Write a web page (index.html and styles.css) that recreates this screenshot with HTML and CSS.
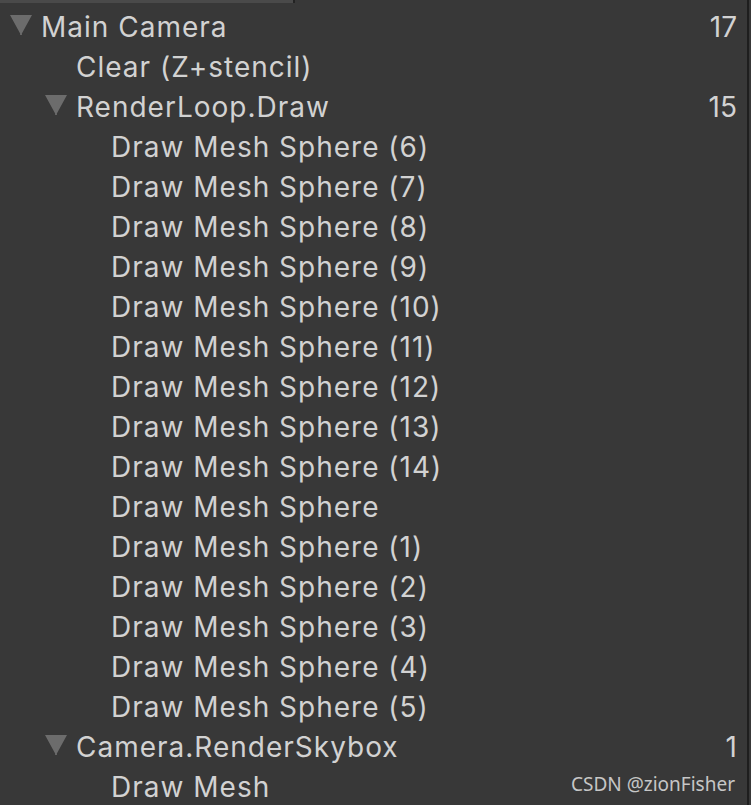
FILE: index.html
```html
<!DOCTYPE html>
<html>
<head>
<meta charset="utf-8">
<link rel="stylesheet" href="styles.css">
</head>
<body>
<div class="panel">
  <div class="topbar"><div class="tab"></div><div class="tabgap"></div></div>
  <div class="tree">
    <div class="row l0"><span class="tri"></span><span class="name">Main Camera</span><span class="count">17</span></div>
    <div class="row l1"><span class="name">Clear (Z+stencil)</span></div>
    <div class="row l1"><span class="tri"></span><span class="name">RenderLoop.Draw</span><span class="count">15</span></div>
    <div class="row l2"><span class="name">Draw Mesh Sphere (6)</span></div>
    <div class="row l2"><span class="name">Draw Mesh Sphere (7)</span></div>
    <div class="row l2"><span class="name">Draw Mesh Sphere (8)</span></div>
    <div class="row l2"><span class="name">Draw Mesh Sphere (9)</span></div>
    <div class="row l2"><span class="name">Draw Mesh Sphere (10)</span></div>
    <div class="row l2"><span class="name">Draw Mesh Sphere (11)</span></div>
    <div class="row l2"><span class="name">Draw Mesh Sphere (12)</span></div>
    <div class="row l2"><span class="name">Draw Mesh Sphere (13)</span></div>
    <div class="row l2"><span class="name">Draw Mesh Sphere (14)</span></div>
    <div class="row l2"><span class="name">Draw Mesh Sphere</span></div>
    <div class="row l2"><span class="name">Draw Mesh Sphere (1)</span></div>
    <div class="row l2"><span class="name">Draw Mesh Sphere (2)</span></div>
    <div class="row l2"><span class="name">Draw Mesh Sphere (3)</span></div>
    <div class="row l2"><span class="name">Draw Mesh Sphere (4)</span></div>
    <div class="row l2"><span class="name">Draw Mesh Sphere (5)</span></div>
    <div class="row l1"><span class="tri"></span><span class="name">Camera.RenderSkybox</span><span class="count">1</span></div>
    <div class="row l2"><span class="name">Draw Mesh</span></div>
  </div>
  <div class="watermark">CSDN @zionFisher</div>
</div>
</body>
</html>
```
FILE: styles.css
```css
html, body {
  margin: 0;
  padding: 0;
  background: #383838;
}
.panel {
  position: relative;
  width: 751px;
  height: 805px;
  overflow: hidden;
  background: #383838;
  font-family: Inter, "Noto Sans", sans-serif;
  color: #d2d2d2;
}
.panel::after {
  content: "";
  position: absolute;
  top: 0;
  bottom: 0;
  left: 747px;
  width: 2px;
  background: #1e1e1e;
}
.topbar {
  display: flex;
  height: 3px;
  margin-bottom: 4px;
}
.tab {
  width: 293px;
  background: #4a4a4a;
}
.tabgap {
  width: 2px;
  background: #232323;
}
.tree {
  display: flex;
  flex-direction: column;
}
.row {
  display: flex;
  align-items: center;
  height: 40px;
  font-size: 28px;
  letter-spacing: 1px;
  padding-right: 14px;
  box-sizing: border-box;
  width: 751px;
}
.l0 { padding-left: 41px; }
.l1 { padding-left: 76px; }
.l2 { padding-left: 111px; }
.name {
  white-space: nowrap;
}
.tri {
  width: 0;
  height: 0;
  position: relative;
}
.tri::before {
  content: "";
  position: absolute;
  left: -31px;
  top: -12px;
  width: 22px;
  height: 20px;
  background: #6c6c6c;
  clip-path: polygon(0 0, 100% 0, 54% 92%, 54% 100%, 46% 100%, 46% 92%);
}
.count {
  margin-left: auto;
  letter-spacing: 0;
}
.watermark {
  position: absolute;
  right: 16px;
  bottom: 8px;
  font-family: "Noto Sans", sans-serif;
  font-size: 19px;
  color: rgba(255, 255, 255, 0.72);
}
```
